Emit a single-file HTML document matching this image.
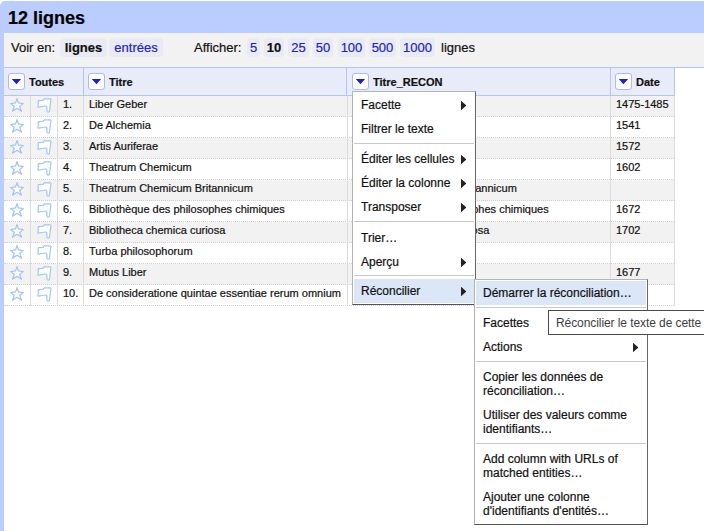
<!DOCTYPE html>
<html><head><meta charset="utf-8">
<style>
*{box-sizing:border-box}
html,body{-webkit-text-stroke:0.2px currentColor;margin:0;padding:0;background:#fff;width:704px;height:531px;overflow:hidden;font-family:"Liberation Sans",sans-serif;color:#111}
#top{position:absolute;left:0;top:1px;width:720px;height:40px;background:#bbccff;border-top-left-radius:5px}
#lstrip{position:absolute;left:0;top:20px;width:4px;height:520px;background:#bbccff}
#title{position:absolute;left:8px;top:8px;font-size:18px;font-weight:bold;color:#000}
#bar{position:absolute;left:4px;top:33px;width:720px;height:35px;background:#f2f2f2;border-bottom:1px solid #b6c4f4}
.t{position:absolute;font-size:13px;white-space:nowrap}
.pill{position:absolute;top:38px;height:19px;background:#e9ebf4;border-radius:4px;font-size:13px;line-height:19px;text-align:center;white-space:nowrap;color:#2222cc}
.pill.b{font-weight:bold;color:#111}
#thead{position:absolute;left:4px;top:67px;width:670px;height:29px;background:#e8ebf8;border-top:1px solid #b6c4f4;border-bottom:1px solid #b6c4f4}
.hsep{position:absolute;top:67px;width:1px;height:29px;background:#b6c4f4}
.dd{position:absolute;top:73px;width:17px;height:17px;background:#fff;border:1px solid #a9b9f5;border-radius:3px}
.dd:after{content:"";position:absolute;left:2.3px;top:4.6px;width:10.3px;height:5.6px;background:#1f1fcc;clip-path:polygon(0 0,100% 0,50% 100%)}
.ht{position:absolute;top:76px;font-size:11px;font-weight:bold;line-height:13px;color:#111}
.row{position:absolute;left:4px;width:670px;height:21px;border-bottom:1px dotted #cfcfcf}
.row.o{background:#f2f2f2}
.vsep{position:absolute;top:96px;height:210px;width:1px;background:#dcdcdc}
.c{position:absolute;font-size:11px;line-height:13px;white-space:nowrap;color:#111}
.star{position:absolute;left:6px;width:24px;height:22px}
.flag{position:absolute;left:32px;width:24px;height:22px}
.menu{position:absolute;background:#fff;border:1px solid #b4b4b4;border-right-color:#666;border-bottom-color:#555}
.mi{position:absolute;left:1px;font-size:12px;line-height:14px;white-space:nowrap;color:#111}
.arr{position:absolute;width:5.4px;height:9.4px;margin-top:-0.2px;background:#222;clip-path:polygon(0 0,100% 50%,0 100%)}
.sep{position:absolute;height:1px;background:#c8c8c8}
.hov{position:absolute;background:#dbe6f7}
#tip{position:absolute;left:548px;top:310px;width:170px;height:25px;background:#fff;border:1px solid #4a4a4a;font-size:12px;line-height:25px;padding-left:7px;color:#3e3e3e;-webkit-text-stroke:0;letter-spacing:-0.08px;white-space:nowrap}
</style></head><body>
<div id="top"></div>
<div id="lstrip"></div>
<div id="title">12 lignes</div>
<div id="bar"></div>
<div class="t" style="left:11px;top:40px">Voir en:</div>
<div class="pill b" style="left:60px;width:47px">lignes</div>
<div class="pill" style="left:109px;width:54px">entrées</div>
<div class="t" style="left:194px;top:40px">Afficher:</div>
<div class="pill" style="left:247px;width:13px">5</div>
<div class="pill b" style="left:264px;width:20px">10</div>
<div class="pill" style="left:288px;width:21px">25</div>
<div class="pill" style="left:313px;width:20px">50</div>
<div class="pill" style="left:338px;width:27px">100</div>
<div class="pill" style="left:369px;width:27px">500</div>
<div class="pill" style="left:400px;width:35px">1000</div>
<div class="t" style="left:441px;top:40px">lignes</div>

<div id="thead"></div>
<div class="hsep" style="left:83px"></div>
<div class="hsep" style="left:346px"></div>
<div class="hsep" style="left:610px"></div>
<div class="hsep" style="left:674px"></div>
<div class="dd" style="left:8px"></div><div class="ht" style="left:29px">Toutes</div>
<div class="dd" style="left:88px"></div><div class="ht" style="left:109px">Titre</div>
<div class="dd" style="left:352px"></div><div class="ht" style="left:373px">Titre_RECON</div>
<div class="dd" style="left:615px"></div><div class="ht" style="left:636px">Date</div>

<div class="row o" style="top:96px"></div>
<div class="row" style="top:117px"></div>
<div class="row o" style="top:138px"></div>
<div class="row" style="top:159px"></div>
<div class="row o" style="top:180px"></div>
<div class="row" style="top:201px"></div>
<div class="row o" style="top:222px"></div>
<div class="row" style="top:243px"></div>
<div class="row o" style="top:264px"></div>
<div class="row" style="top:285px"></div>
<div class="vsep" style="left:30px"></div>
<div class="vsep" style="left:57px"></div>
<div class="vsep" style="left:83px"></div>
<div class="vsep" style="left:347px"></div>
<div class="vsep" style="left:610px"></div>
<div class="vsep" style="left:674px"></div>
<svg class="star" style="top:94px" viewBox="0 0 24 22"><path d="M11 4.6 L12.45 8.95 L17.3 9.6 L13.65 12.55 L15.5 17.1 L11 14.3 L6.5 17.1 L8.35 12.55 L4.7 9.6 L9.55 8.95 Z" fill="#fff" stroke="#a2c6f8" stroke-width="1.25" stroke-linejoin="round"/></svg>
<svg class="flag" style="top:94px" viewBox="0 0 24 22"><path d="M6.4 6.7 L10.9 6.5 L12.3 4.9 L18.7 4.9 Q19.2 5.2 18.9 6.2 L18.3 10.4 L17.4 17.3 Q16.7 18.2 15.7 18 Q14.9 17.6 14.9 16.4 L14.9 13 Q14.5 11.9 13.6 12 L10.4 12.5 L6.1 13.1 Q5.8 13 5.9 12.5 L6.4 10.2 L6.1 8 Z" fill="#fff" stroke="#a2c6f8" stroke-width="1.2" stroke-linejoin="round"/></svg>
<div class="c" style="top:98px;left:63px">1.</div>
<div class="c" style="top:98px;left:89px">Liber Geber</div>
<div class="c" style="top:98px;left:616px">1475-1485</div>
<svg class="star" style="top:115px" viewBox="0 0 24 22"><path d="M11 4.6 L12.45 8.95 L17.3 9.6 L13.65 12.55 L15.5 17.1 L11 14.3 L6.5 17.1 L8.35 12.55 L4.7 9.6 L9.55 8.95 Z" fill="#fff" stroke="#a2c6f8" stroke-width="1.25" stroke-linejoin="round"/></svg>
<svg class="flag" style="top:115px" viewBox="0 0 24 22"><path d="M6.4 6.7 L10.9 6.5 L12.3 4.9 L18.7 4.9 Q19.2 5.2 18.9 6.2 L18.3 10.4 L17.4 17.3 Q16.7 18.2 15.7 18 Q14.9 17.6 14.9 16.4 L14.9 13 Q14.5 11.9 13.6 12 L10.4 12.5 L6.1 13.1 Q5.8 13 5.9 12.5 L6.4 10.2 L6.1 8 Z" fill="#fff" stroke="#a2c6f8" stroke-width="1.2" stroke-linejoin="round"/></svg>
<div class="c" style="top:119px;left:63px">2.</div>
<div class="c" style="top:119px;left:89px">De Alchemia</div>
<div class="c" style="top:119px;left:616px">1541</div>
<svg class="star" style="top:136px" viewBox="0 0 24 22"><path d="M11 4.6 L12.45 8.95 L17.3 9.6 L13.65 12.55 L15.5 17.1 L11 14.3 L6.5 17.1 L8.35 12.55 L4.7 9.6 L9.55 8.95 Z" fill="#fff" stroke="#a2c6f8" stroke-width="1.25" stroke-linejoin="round"/></svg>
<svg class="flag" style="top:136px" viewBox="0 0 24 22"><path d="M6.4 6.7 L10.9 6.5 L12.3 4.9 L18.7 4.9 Q19.2 5.2 18.9 6.2 L18.3 10.4 L17.4 17.3 Q16.7 18.2 15.7 18 Q14.9 17.6 14.9 16.4 L14.9 13 Q14.5 11.9 13.6 12 L10.4 12.5 L6.1 13.1 Q5.8 13 5.9 12.5 L6.4 10.2 L6.1 8 Z" fill="#fff" stroke="#a2c6f8" stroke-width="1.2" stroke-linejoin="round"/></svg>
<div class="c" style="top:140px;left:63px">3.</div>
<div class="c" style="top:140px;left:89px">Artis Auriferae</div>
<div class="c" style="top:140px;left:616px">1572</div>
<svg class="star" style="top:157px" viewBox="0 0 24 22"><path d="M11 4.6 L12.45 8.95 L17.3 9.6 L13.65 12.55 L15.5 17.1 L11 14.3 L6.5 17.1 L8.35 12.55 L4.7 9.6 L9.55 8.95 Z" fill="#fff" stroke="#a2c6f8" stroke-width="1.25" stroke-linejoin="round"/></svg>
<svg class="flag" style="top:157px" viewBox="0 0 24 22"><path d="M6.4 6.7 L10.9 6.5 L12.3 4.9 L18.7 4.9 Q19.2 5.2 18.9 6.2 L18.3 10.4 L17.4 17.3 Q16.7 18.2 15.7 18 Q14.9 17.6 14.9 16.4 L14.9 13 Q14.5 11.9 13.6 12 L10.4 12.5 L6.1 13.1 Q5.8 13 5.9 12.5 L6.4 10.2 L6.1 8 Z" fill="#fff" stroke="#a2c6f8" stroke-width="1.2" stroke-linejoin="round"/></svg>
<div class="c" style="top:161px;left:63px">4.</div>
<div class="c" style="top:161px;left:89px">Theatrum Chemicum</div>
<div class="c" style="top:161px;left:616px">1602</div>
<svg class="star" style="top:178px" viewBox="0 0 24 22"><path d="M11 4.6 L12.45 8.95 L17.3 9.6 L13.65 12.55 L15.5 17.1 L11 14.3 L6.5 17.1 L8.35 12.55 L4.7 9.6 L9.55 8.95 Z" fill="#fff" stroke="#a2c6f8" stroke-width="1.25" stroke-linejoin="round"/></svg>
<svg class="flag" style="top:178px" viewBox="0 0 24 22"><path d="M6.4 6.7 L10.9 6.5 L12.3 4.9 L18.7 4.9 Q19.2 5.2 18.9 6.2 L18.3 10.4 L17.4 17.3 Q16.7 18.2 15.7 18 Q14.9 17.6 14.9 16.4 L14.9 13 Q14.5 11.9 13.6 12 L10.4 12.5 L6.1 13.1 Q5.8 13 5.9 12.5 L6.4 10.2 L6.1 8 Z" fill="#fff" stroke="#a2c6f8" stroke-width="1.2" stroke-linejoin="round"/></svg>
<div class="c" style="top:182px;left:63px">5.</div>
<div class="c" style="top:182px;left:89px">Theatrum Chemicum Britannicum</div>
<div class="c" style="top:182px;left:353px">Theatrum Chemicum Britannicum</div>
<svg class="star" style="top:199px" viewBox="0 0 24 22"><path d="M11 4.6 L12.45 8.95 L17.3 9.6 L13.65 12.55 L15.5 17.1 L11 14.3 L6.5 17.1 L8.35 12.55 L4.7 9.6 L9.55 8.95 Z" fill="#fff" stroke="#a2c6f8" stroke-width="1.25" stroke-linejoin="round"/></svg>
<svg class="flag" style="top:199px" viewBox="0 0 24 22"><path d="M6.4 6.7 L10.9 6.5 L12.3 4.9 L18.7 4.9 Q19.2 5.2 18.9 6.2 L18.3 10.4 L17.4 17.3 Q16.7 18.2 15.7 18 Q14.9 17.6 14.9 16.4 L14.9 13 Q14.5 11.9 13.6 12 L10.4 12.5 L6.1 13.1 Q5.8 13 5.9 12.5 L6.4 10.2 L6.1 8 Z" fill="#fff" stroke="#a2c6f8" stroke-width="1.2" stroke-linejoin="round"/></svg>
<div class="c" style="top:203px;left:63px">6.</div>
<div class="c" style="top:203px;left:89px">Bibliothèque des philosophes chimiques</div>
<div class="c" style="top:203px;left:353px">Bibliothèque des philosophes chimiques</div>
<div class="c" style="top:203px;left:616px">1672</div>
<svg class="star" style="top:220px" viewBox="0 0 24 22"><path d="M11 4.6 L12.45 8.95 L17.3 9.6 L13.65 12.55 L15.5 17.1 L11 14.3 L6.5 17.1 L8.35 12.55 L4.7 9.6 L9.55 8.95 Z" fill="#fff" stroke="#a2c6f8" stroke-width="1.25" stroke-linejoin="round"/></svg>
<svg class="flag" style="top:220px" viewBox="0 0 24 22"><path d="M6.4 6.7 L10.9 6.5 L12.3 4.9 L18.7 4.9 Q19.2 5.2 18.9 6.2 L18.3 10.4 L17.4 17.3 Q16.7 18.2 15.7 18 Q14.9 17.6 14.9 16.4 L14.9 13 Q14.5 11.9 13.6 12 L10.4 12.5 L6.1 13.1 Q5.8 13 5.9 12.5 L6.4 10.2 L6.1 8 Z" fill="#fff" stroke="#a2c6f8" stroke-width="1.2" stroke-linejoin="round"/></svg>
<div class="c" style="top:224px;left:63px">7.</div>
<div class="c" style="top:224px;left:89px">Bibliotheca chemica curiosa</div>
<div class="c" style="top:224px;left:353px">Bibliotheca chemica curiosa</div>
<div class="c" style="top:224px;left:616px">1702</div>
<svg class="star" style="top:241px" viewBox="0 0 24 22"><path d="M11 4.6 L12.45 8.95 L17.3 9.6 L13.65 12.55 L15.5 17.1 L11 14.3 L6.5 17.1 L8.35 12.55 L4.7 9.6 L9.55 8.95 Z" fill="#fff" stroke="#a2c6f8" stroke-width="1.25" stroke-linejoin="round"/></svg>
<svg class="flag" style="top:241px" viewBox="0 0 24 22"><path d="M6.4 6.7 L10.9 6.5 L12.3 4.9 L18.7 4.9 Q19.2 5.2 18.9 6.2 L18.3 10.4 L17.4 17.3 Q16.7 18.2 15.7 18 Q14.9 17.6 14.9 16.4 L14.9 13 Q14.5 11.9 13.6 12 L10.4 12.5 L6.1 13.1 Q5.8 13 5.9 12.5 L6.4 10.2 L6.1 8 Z" fill="#fff" stroke="#a2c6f8" stroke-width="1.2" stroke-linejoin="round"/></svg>
<div class="c" style="top:245px;left:63px">8.</div>
<div class="c" style="top:245px;left:89px">Turba philosophorum</div>
<svg class="star" style="top:262px" viewBox="0 0 24 22"><path d="M11 4.6 L12.45 8.95 L17.3 9.6 L13.65 12.55 L15.5 17.1 L11 14.3 L6.5 17.1 L8.35 12.55 L4.7 9.6 L9.55 8.95 Z" fill="#fff" stroke="#a2c6f8" stroke-width="1.25" stroke-linejoin="round"/></svg>
<svg class="flag" style="top:262px" viewBox="0 0 24 22"><path d="M6.4 6.7 L10.9 6.5 L12.3 4.9 L18.7 4.9 Q19.2 5.2 18.9 6.2 L18.3 10.4 L17.4 17.3 Q16.7 18.2 15.7 18 Q14.9 17.6 14.9 16.4 L14.9 13 Q14.5 11.9 13.6 12 L10.4 12.5 L6.1 13.1 Q5.8 13 5.9 12.5 L6.4 10.2 L6.1 8 Z" fill="#fff" stroke="#a2c6f8" stroke-width="1.2" stroke-linejoin="round"/></svg>
<div class="c" style="top:266px;left:63px">9.</div>
<div class="c" style="top:266px;left:89px">Mutus Liber</div>
<div class="c" style="top:266px;left:616px">1677</div>
<svg class="star" style="top:283px" viewBox="0 0 24 22"><path d="M11 4.6 L12.45 8.95 L17.3 9.6 L13.65 12.55 L15.5 17.1 L11 14.3 L6.5 17.1 L8.35 12.55 L4.7 9.6 L9.55 8.95 Z" fill="#fff" stroke="#a2c6f8" stroke-width="1.25" stroke-linejoin="round"/></svg>
<svg class="flag" style="top:283px" viewBox="0 0 24 22"><path d="M6.4 6.7 L10.9 6.5 L12.3 4.9 L18.7 4.9 Q19.2 5.2 18.9 6.2 L18.3 10.4 L17.4 17.3 Q16.7 18.2 15.7 18 Q14.9 17.6 14.9 16.4 L14.9 13 Q14.5 11.9 13.6 12 L10.4 12.5 L6.1 13.1 Q5.8 13 5.9 12.5 L6.4 10.2 L6.1 8 Z" fill="#fff" stroke="#a2c6f8" stroke-width="1.2" stroke-linejoin="round"/></svg>
<div class="c" style="top:287px;left:63px">10.</div>
<div class="c" style="top:287px;left:89px">De consideratione quintae essentiae rerum omnium</div>
<div class="menu" style="left:352px;top:91px;width:124px;height:214px"></div>
<div class="hov" style="left:354px;top:279px;width:121px;height:24px"></div>
<div class="mi" style="left:361px;top:98px">Facette</div>
<div class="arr" style="left:461px;top:101px"></div>
<div class="mi" style="left:361px;top:122px">Filtrer le texte</div>
<div class="mi" style="left:361px;top:152px">Éditer les cellules</div>
<div class="arr" style="left:461px;top:155px"></div>
<div class="mi" style="left:361px;top:176px">Éditer la colonne</div>
<div class="arr" style="left:461px;top:179px"></div>
<div class="mi" style="left:361px;top:200px">Transposer</div>
<div class="arr" style="left:461px;top:203px"></div>
<div class="mi" style="left:361px;top:231px">Trier…</div>
<div class="mi" style="left:361px;top:255px">Aperçu</div>
<div class="arr" style="left:461px;top:258px"></div>
<div class="mi" style="left:361px;top:284px">Réconcilier</div><div class="arr" style="left:461px;top:287px"></div>
<div class="sep" style="left:354px;top:143px;width:120px"></div>
<div class="sep" style="left:354px;top:221px;width:120px"></div>
<div class="sep" style="left:354px;top:275px;width:120px"></div>
<div class="menu" style="left:474px;top:279px;width:174px;height:246px"></div>
<div class="hov" style="left:476px;top:281px;width:170px;height:24px"></div>
<div class="mi" style="left:483px;top:286px">Démarrer la réconciliation…</div>
<div class="sep" style="left:476px;top:307px;width:170px"></div>
<div class="mi" style="left:483px;top:316px">Facettes</div>
<div class="mi" style="left:483px;top:340px">Actions</div><div class="arr" style="left:633px;top:343px"></div>
<div class="sep" style="left:476px;top:361px;width:170px"></div>
<div class="mi" style="left:483px;top:370px">Copier les données de<br>réconciliation…</div>
<div class="mi" style="left:483px;top:408px">Utiliser des valeurs comme<br>identifiants…</div>
<div class="sep" style="left:476px;top:443px;width:170px"></div>
<div class="mi" style="left:483px;top:452px">Add column with URLs of<br>matched entities…</div>
<div class="mi" style="left:483px;top:490px">Ajouter une colonne<br>d'identifiants d'entités…</div>
<div id="tip">Réconcilier le texte de cette colonne</div>
</body></html>
